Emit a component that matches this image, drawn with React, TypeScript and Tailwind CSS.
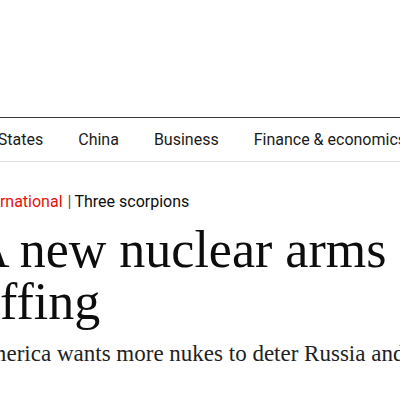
const navItems = ["United States", "China", "Business", "Finance & economics", "Science"];

export default function App() {
    return (
        <main className="w-[400px] h-[400px] overflow-hidden bg-white text-[#0d0d0d]">
            {/* masthead area is empty white above the nav */}
            <div className="h-[117px]" />

            <nav className="border-t border-t-[#383838] border-b border-b-[#e2e2e2] h-[45px] flex items-center">
                <ul className="flex items-center gap-[35px] -ml-[52px] whitespace-nowrap font-['Roboto',sans-serif] text-[16px] text-[#1a1a1a]">
                    {navItems.map((item) => (
                        <li key={item}>{item}</li>
                    ))}
                </ul>
            </nav>

            <article className="mt-[30px]">
                <p className="-ml-[27px] whitespace-nowrap font-['Roboto',sans-serif] text-[16px] leading-[20px]">
                    <span className="text-[#e3120b]">International</span>
                    <span className="ml-[5px] mr-[3px] text-[#555]">|</span>
                    <span>Three scorpions</span>
                </p>

                <h1 className="mt-[12px] -ml-[28px] whitespace-nowrap font-['Liberation_Serif',serif] text-[52px] leading-[52px]">
                    A new nuclear arms race
                    <br />
                    <span className="ml-[28px]">ffing</span>
                </h1>

                <p className="mt-[11px] -ml-[28px] whitespace-nowrap font-['Liberation_Serif',serif] text-[23px] leading-[30px] text-[#222]">
                    America wants more nukes to deter Russia and China
                </p>
            </article>
        </main>
    );
}
